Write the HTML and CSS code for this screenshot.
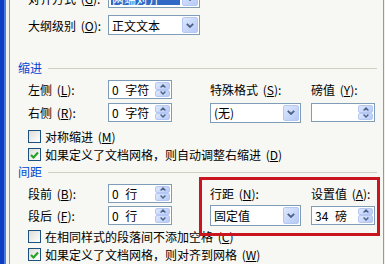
FILE: index.html
```html
<!DOCTYPE html>
<html lang="zh-CN">
<head>
<meta charset="utf-8">
<title>段落</title>
<link rel="stylesheet" href="styles.css">
</head>
<body>
<div class="screen">
  <div class="frame"></div>
  <div class="panel">
    <div class="top">
      <span class="lbl">对齐方式 (<u>G</u>):</span>
      <div class="combo"><span class="val sel">两端对齐</span><span class="drop"><svg width="8" height="5" viewBox="0 0 8 5"><polyline points="0.8,0.8 4,4 7.2,0.8" fill="none" stroke="#4d6185" stroke-width="1.8"/></svg></span></div>
      <span class="lbl">大纲级别 (<u>O</u>):</span>
      <div class="combo"><span class="val">正文文本</span><span class="drop"><svg width="8" height="5" viewBox="0 0 8 5"><polyline points="0.8,0.8 4,4 7.2,0.8" fill="none" stroke="#4d6185" stroke-width="1.8"/></svg></span></div>
    </div>

    <div class="group-head"><span>缩进</span><i class="rule"></i></div>
    <div class="grid indent">
      <span class="lbl c1">左侧 (<u>L</u>):</span>
      <div class="spin c2"><span class="val">0 字符</span><span class="btns"><span class="b"><svg width="6" height="4" viewBox="0 0 6 4"><polyline points="0.6,3.4 3,1 5.4,3.4" fill="none" stroke="#4d6185" stroke-width="1.4"/></svg></span><span class="b"><svg width="6" height="4" viewBox="0 0 6 4"><polyline points="0.6,0.6 3,3 5.4,0.6" fill="none" stroke="#4d6185" stroke-width="1.4"/></svg></span></span></div>
      <span class="lbl c4">特殊格式 (<u>S</u>):</span>
      <span class="lbl c6">磅值 (<u>Y</u>):</span>

      <span class="lbl c1">右侧 (<u>R</u>):</span>
      <div class="spin c2"><span class="val">0 字符</span><span class="btns"><span class="b"><svg width="6" height="4" viewBox="0 0 6 4"><polyline points="0.6,3.4 3,1 5.4,3.4" fill="none" stroke="#4d6185" stroke-width="1.4"/></svg></span><span class="b"><svg width="6" height="4" viewBox="0 0 6 4"><polyline points="0.6,0.6 3,3 5.4,0.6" fill="none" stroke="#4d6185" stroke-width="1.4"/></svg></span></span></div>
      <div class="combo c4"><span class="val">(无)</span><span class="drop"><svg width="8" height="5" viewBox="0 0 8 5"><polyline points="0.8,0.8 4,4 7.2,0.8" fill="none" stroke="#4d6185" stroke-width="1.8"/></svg></span></div>
      <div class="spin c6"><span class="val"></span><span class="btns"><span class="b"><svg width="6" height="4" viewBox="0 0 6 4"><polyline points="0.6,3.4 3,1 5.4,3.4" fill="none" stroke="#4d6185" stroke-width="1.4"/></svg></span><span class="b"><svg width="6" height="4" viewBox="0 0 6 4"><polyline points="0.6,0.6 3,3 5.4,0.6" fill="none" stroke="#4d6185" stroke-width="1.4"/></svg></span></span></div>
    </div>

    <div class="checks first">
      <div class="check"><span class="box"></span><span>对称缩进 (<u>M</u>)</span></div>
      <div class="check"><span class="box"><svg width="9" height="8" viewBox="0 0 9 8"><polyline points="1,4 3.5,6.5 8,1.5" fill="none" stroke="#21a121" stroke-width="2"/></svg></span><span>如果定义了文档网格，则自动调整右缩进 (<u>D</u>)</span></div>
    </div>

    <div class="group-head gh2"><span>间距</span><i class="rule"></i></div>
    <div class="grid spacing">
      <span class="lbl c1">段前 (<u>B</u>):</span>
      <div class="spin c2"><span class="val">0 行</span><span class="btns"><span class="b"><svg width="6" height="4" viewBox="0 0 6 4"><polyline points="0.6,3.4 3,1 5.4,3.4" fill="none" stroke="#4d6185" stroke-width="1.4"/></svg></span><span class="b"><svg width="6" height="4" viewBox="0 0 6 4"><polyline points="0.6,0.6 3,3 5.4,0.6" fill="none" stroke="#4d6185" stroke-width="1.4"/></svg></span></span></div>
      <span class="lbl c4">行距 (<u>N</u>):</span>
      <span class="lbl c6">设置值 (<u>A</u>):</span>

      <span class="lbl c1">段后 (<u>F</u>):</span>
      <div class="spin c2"><span class="val">0 行</span><span class="btns"><span class="b"><svg width="6" height="4" viewBox="0 0 6 4"><polyline points="0.6,3.4 3,1 5.4,3.4" fill="none" stroke="#4d6185" stroke-width="1.4"/></svg></span><span class="b"><svg width="6" height="4" viewBox="0 0 6 4"><polyline points="0.6,0.6 3,3 5.4,0.6" fill="none" stroke="#4d6185" stroke-width="1.4"/></svg></span></span></div>
      <div class="combo tall c4"><span class="val">固定值</span><span class="drop"><svg width="8" height="5" viewBox="0 0 8 5"><polyline points="0.8,0.8 4,4 7.2,0.8" fill="none" stroke="#4d6185" stroke-width="1.8"/></svg></span></div>
      <div class="spin c6"><span class="val">34 磅</span><span class="btns"><span class="b"><svg width="6" height="4" viewBox="0 0 6 4"><polyline points="0.6,3.4 3,1 5.4,3.4" fill="none" stroke="#4d6185" stroke-width="1.4"/></svg></span><span class="b"><svg width="6" height="4" viewBox="0 0 6 4"><polyline points="0.6,0.6 3,3 5.4,0.6" fill="none" stroke="#4d6185" stroke-width="1.4"/></svg></span></span></div>
    </div>

    <div class="checks second">
      <div class="check"><span class="box"></span><span>在相同样式的段落间不添加空格 (<u>C</u>)</span></div>
      <div class="check"><span class="box"><svg width="9" height="8" viewBox="0 0 9 8"><polyline points="1,4 3.5,6.5 8,1.5" fill="none" stroke="#21a121" stroke-width="2"/></svg></span><span>如果定义了文档网格，则对齐到网格 (<u>W</u>)</span></div>
    </div>
  </div>
  <div class="callout"></div>
</div>
</body>
</html>
```

FILE: styles.css
```css
* { box-sizing: border-box; }

body {
  margin: 0;
  font-family: "Noto Sans CJK SC", "Noto Sans", sans-serif;
  font-size: 12px;
  color: #000;
}

.screen {
  position: relative;
  display: flex;
  width: 385px;
  height: 264px;
  overflow: hidden;
  background: #f1f0e9;
}

.frame {
  flex: none;
  width: 6px;
  background: linear-gradient(90deg, #0b3cc1 0, #0b3cc1 4px, #4a7ee6 4px, #4a7ee6 6px);
}

.panel {
  flex: none;
  margin-left: 3px;
  width: 375px;
  border-left: 1px solid #919b9c;
  border-right: 1px solid #919b9c;
  background: #f7f7f3;
  display: flex;
  flex-direction: column;
}

.lbl {
  line-height: 15px;
  white-space: nowrap;
  word-spacing: 2px;
}

.top {
  margin-top: -12px;
  padding-left: 18px;
  display: grid;
  grid-template-columns: 80px 92px;
  grid-auto-rows: 20px;
  row-gap: 7px;
  align-items: center;
}

.group-head {
  margin-top: 26px;
  height: 14px;
  padding-left: 8px;
  padding-right: 6px;
  display: flex;
  align-items: center;
  color: #0046d5;
  line-height: 14px;
}
.group-head.gh2 { margin-top: 3px; }
.group-head .rule {
  flex: 1;
  height: 1px;
  margin-left: 6px;
  background: #d0d0bf;
}

.grid {
  padding-left: 18px;
  display: grid;
  grid-template-columns: 80px 64px 38px 91px 10px 64px;
  align-items: center;
}
.indent {
  margin-top: 5px;
  grid-template-rows: 19px 19px;
  row-gap: 4px;
}
.spacing {
  margin-top: 4px;
  grid-template-rows: 20px 20px;
  row-gap: 2px;
}
.c1 { grid-column: 1; }
.c2 { grid-column: 2; }
.c4 { grid-column: 4; }
.c6 { grid-column: 6; }

.combo {
  height: 20px;
  border: 1px solid #7f9db9;
  background: #fff;
  display: flex;
  align-items: center;
}
.combo.tall { height: 21px; }
.combo .val {
  flex: 1;
  padding-left: 3px;
  line-height: 15px;
  white-space: nowrap;
}
.combo .val.sel {
  align-self: stretch;
  margin: 2px 1px 2px 2px;
  padding-left: 1px;
  background: #316ac5;
  color: #fff;
  display: flex;
  align-items: center;
}
.combo .drop {
  flex: none;
  width: 16px;
  align-self: stretch;
  margin: 1px;
  border: 1px solid #b4c8f3;
  border-radius: 2px;
  background: linear-gradient(135deg, #dde7fe, #b6caf6);
  display: flex;
  align-items: center;
  justify-content: center;
}

.spin {
  height: 19px;
  border: 1px solid #7f9db9;
  background: #fff;
  display: flex;
  align-items: center;
}
.spin .val {
  flex: 1;
  padding-left: 3px;
  line-height: 15px;
  white-space: nowrap;
  word-spacing: 4px;
}
.spin .btns {
  flex: none;
  width: 15px;
  align-self: stretch;
  margin: 1px;
  display: flex;
  flex-direction: column;
}
.spin .b {
  flex: 1;
  border: 1px solid #b4c8f3;
  border-radius: 2px;
  background: linear-gradient(135deg, #dde7fe, #b6caf6);
  display: flex;
  align-items: center;
  justify-content: center;
}

.checks {
  padding-left: 18px;
  display: flex;
  flex-direction: column;
  gap: 3px;
}
.checks.first { margin-top: 7px; }
.checks.second { margin-top: 4px; }

.check {
  height: 15px;
  display: flex;
  align-items: center;
  gap: 4px;
  white-space: nowrap;
  line-height: 15px;
  word-spacing: 2px;
}
.box {
  flex: none;
  width: 13px;
  height: 13px;
  border: 1px solid #1c5180;
  background: linear-gradient(135deg, #dcdcd7, #ffffff);
  display: flex;
  align-items: center;
  justify-content: center;
}

.callout {
  position: absolute;
  left: 199px;
  top: 177px;
  width: 181px;
  height: 59px;
  border: 3px solid #c8151e;
}
```
